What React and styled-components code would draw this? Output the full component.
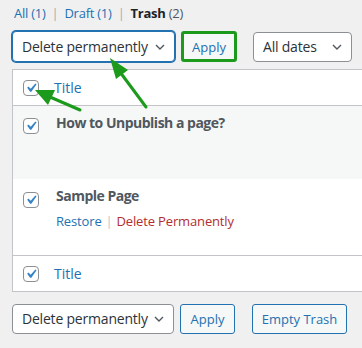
import React from "react"
import styled, { createGlobalStyle } from "styled-components"

const GlobalStyle = createGlobalStyle`
  body {
    margin: 0;
    background: #f0f0f1;
    font-family: "Open Sans", "Noto Sans", sans-serif;
    color: #3c434a;
  }
`

const Chevron = () => (
  <svg width="10" height="6" viewBox="0 0 10 6">
    <path d="M1 1l4 4 4-4" fill="none" stroke="#50575e" strokeWidth="1.4" />
  </svg>
)

const Check = ({ top }) => (
  <CheckBox top={top}>
    <svg width="20" height="20" viewBox="0 0 20 20">
      <path d="M14.83 4.89l1.34.94-5.81 8.38H9.02L5.78 9.67l1.34-1.25 2.57 2.4z" fill="#3582c4" />
    </svg>
  </CheckBox>
)

const Arrows = () => (
  <Overlay width="362" height="348" viewBox="0 0 362 348">
    <g stroke="#1c9a1c" strokeWidth="3" strokeLinecap="round">
      <line x1="146" y1="107" x2="120" y2="72" />
      <line x1="80" y1="110" x2="50" y2="97" />
    </g>
    <g fill="#1c9a1c">
      <polygon points="110,58 128,70 116,79" />
      <polygon points="35,90 55,90 48,105" />
    </g>
  </Overlay>
)

export default function App() {
  return (
    <Page>
      <GlobalStyle />
      <SubNav>
        <NavLink>All (1)</NavLink>
        <Sep>|</Sep>
        <NavLink>Draft (1)</NavLink>
        <Sep>|</Sep>
        <Current>Trash <Muted>(2)</Muted></Current>
      </SubNav>

      <TableNav top={9}>
        <Select focused width={163}>
          Delete permanently <Chevron />
        </Select>
        <Button marked width={56}>Apply</Button>
        <Select width={99} gap={10}>
          All dates <Chevron />
        </Select>
        <Button width={40} gap={7} />
      </TableNav>

      <Table>
        <HeadRow>
          <Check />
          <TitleLink>Title</TitleLink>
        </HeadRow>
        <Row shaded height={73}>
          <Check top={12} />
          <Cell>
            <RowTitle>How to Unpublish a page?</RowTitle>
          </Cell>
        </Row>
        <Row height={76}>
          <Check top={13} />
          <Cell>
            <RowTitle>Sample Page</RowTitle>
            <Actions>
              <Action>Restore</Action>
              <ActionSep>|</ActionSep>
              <Action danger>Delete Permanently</Action>
            </Actions>
          </Cell>
        </Row>
        <FootRow>
          <Check />
          <TitleLink>Title</TitleLink>
        </FootRow>
      </Table>

      <TableNav top={11}>
        <Select width={162}>
          Delete permanently <Chevron />
        </Select>
        <Button width={55}>Apply</Button>
        <Button width={95} gap={11}>Empty Trash</Button>
      </TableNav>

      <Arrows />
    </Page>
  )
}

const Page = styled.div`
  position: relative;
  width: 362px;
  height: 348px;
  padding-left: 12px;
  box-sizing: border-box;
  overflow: hidden;
`

const SubNav = styled.div`
  display: flex;
  align-items: center;
  padding: 4px 0 0 2px;
  height: 18px;
  font-size: 13px;
  line-height: 18px;
  letter-spacing: -0.25px;
  white-space: nowrap;
`

const NavLink = styled.span`
  color: #2271b1;
`

const Sep = styled.span`
  color: #a7aaad;
  margin: 0 6px;
`

const Current = styled.span`
  color: #1d2327;
  font-weight: 700;
  white-space: pre;
`

const Muted = styled.span`
  color: #50575e;
  font-weight: 400;
`

const TableNav = styled.div`
  display: flex;
  align-items: center;
  gap: 6px;
  margin-top: ${({ top }) => top}px;
  height: 31px;
`

const Select = styled.div`
  flex-shrink: 0;
  box-sizing: border-box;
  display: flex;
  align-items: center;
  justify-content: space-between;
  width: ${({ width }) => width}px;
  height: ${({ focused }) => (focused ? 31 : 30)}px;
  margin-left: ${({ gap }) => gap || 0}px;
  padding: 0 9px 0 9px;
  background: #fff;
  border: 1px solid ${({ focused }) => (focused ? "#2271b1" : "#8c8f94")};
  box-shadow: ${({ focused }) => (focused ? "0 0 0 1px #2271b1" : "none")};
  border-radius: 4px;
  font-size: 14px;
  letter-spacing: -0.2px;
  color: #2c3338;
  white-space: nowrap;
`

const Button = styled.div`
  flex-shrink: 0;
  box-sizing: border-box;
  display: flex;
  align-items: center;
  justify-content: center;
  width: ${({ width }) => width}px;
  height: ${({ marked }) => (marked ? 31 : 30)}px;
  margin-left: ${({ gap }) => gap || 0}px;
  background: #f6f7f7;
  border: ${({ marked }) => (marked ? "3px solid #1c9a1c" : "1px solid #2271b1")};
  border-radius: 3px;
  font-size: 13px;
  color: #2271b1;
  white-space: nowrap;
`

const Table = styled.div`
  margin-top: 7px;
  width: 420px;
  background: #fff;
  border: 1px solid #c3c4c7;
`

const HeadRow = styled.div`
  display: flex;
  align-items: center;
  height: 35px;
  padding-left: 10px;
  border-bottom: 1px solid #c3c4c7;
`

const FootRow = styled(HeadRow)`
  border-bottom: none;
  border-top: 1px solid #c3c4c7;
`

const Row = styled.div`
  display: flex;
  align-items: flex-start;
  height: ${({ height }) => height}px;
  padding-left: 10px;
  background: ${({ shaded }) => (shaded ? "#f6f7f7" : "#fff")};
`

const CheckBox = styled.div`
  flex-shrink: 0;
  box-sizing: border-box;
  display: flex;
  align-items: center;
  justify-content: center;
  width: 16px;
  height: 16px;
  margin-top: ${({ top }) => top || 0}px;
  background: #fff;
  border: 1px solid #8c8f94;
  border-radius: 4px;
  svg {
    margin: -2px;
  }
`

const TitleLink = styled.span`
  margin-left: 15px;
  font-size: 14px;
  color: #2271b1;
`

const Cell = styled.div`
  display: flex;
  flex-direction: column;
  margin-left: 17px;
  padding-top: 7px;
`

const RowTitle = styled.div`
  font-size: 14px;
  line-height: 20px;
  font-weight: 700;
  letter-spacing: -0.5px;
  color: #50575e;
  white-space: nowrap;
`

const Actions = styled.div`
  display: flex;
  margin-top: 6px;
  font-size: 13px;
  line-height: 18px;
  letter-spacing: -0.15px;
  white-space: nowrap;
`

const Action = styled.span`
  color: ${({ danger }) => (danger ? "#b32d2e" : "#2271b1")};
`

const ActionSep = styled.span`
  color: #c3c4c7;
  margin: 0 4px;
`

const Overlay = styled.svg`
  position: absolute;
  top: 0;
  left: 0;
  pointer-events: none;
`
